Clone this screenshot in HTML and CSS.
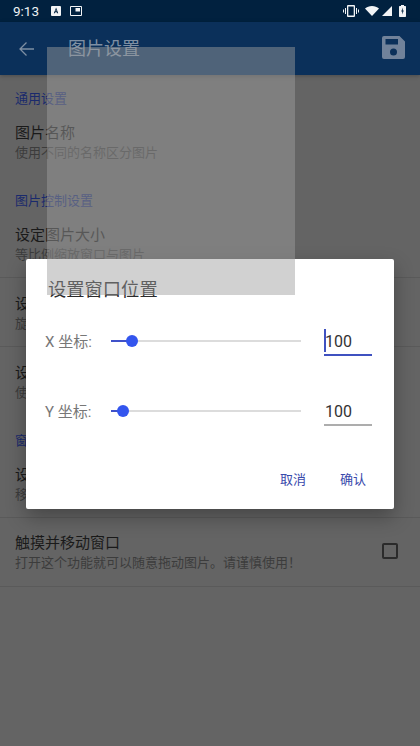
FILE: index.html
```html
<!DOCTYPE html>
<html lang="zh">
<head>
<meta charset="utf-8">
<title>图片设置</title>
<link rel="stylesheet" href="styles.css">
</head>
<body>
<div class="screen">
  <header class="statusbar">
    <div class="status-left">
      <span class="time">9:13</span>
      <svg class="ic-a" viewBox="0 0 10 10"><path fill="#f2f4f6" fill-rule="evenodd" d="M1 0h8a1 1 0 0 1 1 1v8a1 1 0 0 1-1 1H1a1 1 0 0 1-1-1V1a1 1 0 0 1 1-1zM5 1.800 2.800 7.200h1.100l.4-1h1.400l.4 1h1.100L5.200 1.800zM5 3.600l.5 1.700h-1z"/></svg>
      <svg class="ic-pip" viewBox="0 0 12 10"><path fill="#f2f4f6" fill-rule="evenodd" d="M1 0h10a1 1 0 0 1 1 1v8a1 1 0 0 1-1 1H1a1 1 0 0 1-1-1V1a1 1 0 0 1 1-1zM1 1v8h10V1zM5.500 2H10v3.500H5.500z"/></svg>
    </div>
    <div class="status-right">
      <svg class="ic-vib" viewBox="0 0 16 12"><path fill="#f2f4f6" fill-rule="evenodd" d="M5 0h6a1 1 0 0 1 1 1v10a1 1 0 0 1-1 1H5a1 1 0 0 1-1-1V1a1 1 0 0 1 1-1zM5.300 1.500v9h5.400v-9zM2 3h1v6H2zM13 3h1v6h-1zM0 4.500h1v3H0zM15 4.500h1v3h-1z"/></svg>
      <svg class="ic-wifi" viewBox="0 0 14 10"><path fill="#f2f4f6" d="M7 10 0 2.500C1.800 1 4.300 0 7 0s5.200 1 7 2.500z"/></svg>
      <svg class="ic-sig" viewBox="0 0 10 10"><path fill="#f2f4f6" d="M10 0v10H0z"/></svg>
      <svg class="ic-bat" viewBox="0 0 7 12"><path fill="#f2f4f6" fill-rule="evenodd" d="M2 0h3v1h1.300a.7.7 0 0 1 .7.700v9.600a.7.7 0 0 1-.7.700H.7a.7.700 0 0 1-.7-.7V1.700A.7.7 0 0 1 .7 1H2zM3.900 2.500 2.200 6.500h1.100l-.2 3 1.700-4H3.700z"/></svg>
    </div>
  </header>
  <div class="toolbar">
    <svg class="ic-back" viewBox="0 0 15 14"><path fill="none" stroke="#7e8fa3" stroke-width="1.300" d="M15 7H1.200M7.500.5 1 7l6.500 6.500"/></svg>
    <h1 class="tb-title">图片设置</h1>
    <svg class="ic-save" viewBox="0 0 23 23"><path fill="#71829a" fill-rule="evenodd" d="M2 0h15.500L23 5.500V21a2 2 0 0 1-2 2H2a2 2 0 0 1-2-2V2a2 2 0 0 1 2-2zM3.500 3v5.500H16V3zM11.500 12.500a3.500 3.500 0 1 0 0 7 3.500 3.500 0 0 0 0-7z"/></svg>
  </div>
  <main class="list">
    <section class="group g-first">
      <h2 class="sec">通用设置</h2>
      <div class="row no-line"><div class="r-title">图片名称</div><div class="r-sub">使用不同的名称区分图片</div></div>
    </section>
    <section class="group">
      <h2 class="sec">图片控制设置</h2>
      <div class="row"><div class="r-title">设定图片大小</div><div class="r-sub">等比例缩放窗口与图片</div></div>
      <div class="row"><div class="r-title">设定图片角度</div><div class="r-sub">旋转窗口中的图片</div></div>
      <div class="row no-line"><div class="r-title">设定图片透明度</div><div class="r-sub">使图片变得透明</div></div>
    </section>
    <section class="group">
      <h2 class="sec">窗口控制设置</h2>
      <div class="row"><div class="r-title">设定窗口位置</div><div class="r-sub">移动窗口到指定位置</div></div>
      <div class="row check-row">
        <div><div class="r-title">触摸并移动窗口</div><div class="r-sub">打开这个功能就可以随意拖动图片。请谨慎使用！</div></div>
        <span class="checkbox"></span>
      </div>
    </section>
  </main>
  <div class="dialog">
    <h3 class="d-title">设置窗口位置</h3>
    <div class="d-row d-row-x">
      <span class="d-label">X 坐标:</span>
      <div class="slider"><span class="fill fill-x"></span><span class="thumb"></span></div>
      <div class="field active"><span class="caret"></span>100</div>
    </div>
    <div class="d-row d-row-y">
      <span class="d-label">Y 坐标:</span>
      <div class="slider"><span class="fill fill-y"></span><span class="thumb"></span></div>
      <div class="field">100</div>
    </div>
    <div class="d-actions"><span class="btn">取消</span><span class="btn">确认</span></div>
  </div>
  <div class="float-image"></div>
</div>
</body>
</html>
```
FILE: styles.css
```css
* { box-sizing: border-box; }
html, body { margin: 0; padding: 0; }
body { font-family: Roboto, "Noto Sans CJK SC", sans-serif; background: #646464; }
.screen { position: relative; width: 420px; height: 746px; overflow: hidden; background: #646464; color: #1b1b1b; }
.statusbar { height: 22px; background: #01213f; display: flex; align-items: center; justify-content: space-between; padding: 0 14px 0 13px; }
.status-left, .status-right { display: flex; align-items: center; }
.time { color: #eef1f4; font-size: 13.500px; width: 38px; }
.ic-a { width: 10px; height: 10px; margin-right: 9px; display: block; }
.ic-pip { width: 12px; height: 10px; display: block; }
.ic-vib { width: 16px; height: 12px; margin-right: 6px; display: block; }
.ic-wifi { width: 14px; height: 10px; margin-right: 3px; display: block; }
.ic-sig { width: 10px; height: 10px; margin-right: 7px; display: block; }
.ic-bat { width: 7px; height: 12px; display: block; }
.toolbar { position: relative; height: 53px; background: #0b305a; display: flex; align-items: center; padding: 0 15px 0 19px; box-shadow: 0 1px 4px rgba(0,0,0,.25); }
.ic-back { width: 15px; height: 14px; display: block; }
.tb-title { margin: 0 0 0 34px; flex: 1; font-size: 18px; font-weight: 400; color: #7e8fa3; line-height: 24px; }
.ic-save { width: 23px; height: 23px; display: block; margin-bottom: 2px; }
.group { padding-top: 15px; }
.g-first { padding-top: 14px; }
.sec { margin: 0; padding-left: 15px; height: 18px; font-size: 13px; line-height: 20px; font-weight: 400; color: #1a2a6c; }
.row { height: 69px; padding: 16px 15px 0; border-bottom: 1px solid #5a5a5a; }
.no-line { border-bottom: 0; }
.r-title { font-size: 15px; line-height: 21px; color: #1a1a1a; }
.r-sub { font-size: 13px; line-height: 17px; color: #3c3c3c; }
.check-row { display: flex; justify-content: space-between; align-items: center; padding: 0 22px 0 15px; }
.checkbox { width: 16px; height: 16px; border: 2px solid #2b2b2b; border-radius: 2px; display: block; margin-bottom: 3px; }
.dialog { position: absolute; left: 26px; top: 259px; width: 368px; height: 250px; background: #fff; border-radius: 2px; box-shadow: 0 8px 20px rgba(0,0,0,.3); padding: 19px 22px 0 19px; display: flex; flex-direction: column; }
.d-title { margin: 0 0 0 3px; font-size: 18.300px; font-weight: 400; line-height: 24px; color: #2a2a2a; }
.d-row { display: flex; align-items: center; height: 30px; }
.d-row-x { margin-top: 24px; }
.d-row-y { margin-top: 40px; }
.d-label { flex: none; width: 66px; margin-bottom: 2px; font-size: 15px; color: #777; white-space: nowrap; }
.slider { flex: none; position: relative; width: 190px; height: 2px; background: #dcdcdc; }
.fill { position: absolute; left: 0; top: 0; height: 2px; background: #3f51c9; }
.fill-x { width: 21px; }
.fill-y { width: 12px; }
.thumb { position: absolute; top: -5px; width: 12px; height: 12px; border-radius: 50%; background: #3355ee; }
.fill-x + .thumb { left: 15px; }
.fill-y + .thumb { left: 6px; }
.field { flex: none; position: relative; margin-left: 23px; width: 48px; height: 30px; padding-left: 1px; font-size: 16px; line-height: 32px; color: #333; border-bottom: 2px solid #adadad; }
.field.active { border-bottom-color: #3f51c0; }
.caret { position: absolute; left: 0; top: 3px; width: 2px; height: 23px; background: #3f51c0; }
.d-actions { display: flex; justify-content: flex-end; gap: 34px; margin-top: 45px; padding-right: 6px; }
.btn { font-size: 13px; line-height: 18px; color: #3949ab; }
.float-image { position: absolute; left: 47px; top: 47px; width: 248px; height: 248px; background: rgba(158,158,158,.47); }
```
